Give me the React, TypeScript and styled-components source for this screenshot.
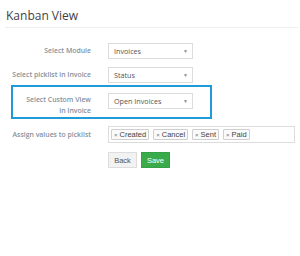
import React from "react";
import styled, { createGlobalStyle } from "styled-components";

const GlobalStyle = createGlobalStyle`
  body {
    margin: 0;
    background: #ffffff;
    font-family: "Open Sans", sans-serif;
  }
`;

const Page = styled.div`
  width: 300px;
  height: 256px;
  background: #fff;
`;

const Title = styled.h1`
  margin: 0;
  padding: 7px 0 0 6px;
  font-size: 12px;
  line-height: 18px;
  font-weight: 400;
  color: #3f3f3f;
`;

const Divider = styled.div`
  margin: 2px 2px 0 5px;
  height: 1px;
  background: #eeeeee;
`;

const Form = styled.div`
  display: flex;
  flex-direction: column;
  align-items: flex-start;
  padding: 15px 0 0 13px;
`;

const Row = styled.div<{ $highlighted?: boolean; $top: number }>`
  display: flex;
  align-items: flex-start;
  margin-top: ${(p) => p.$top}px;
  margin-left: ${(p) => (p.$highlighted ? "-2px" : "0")};
  padding: ${(p) => (p.$highlighted ? "6px 17px 1px 0" : "0")};
  border: ${(p) => (p.$highlighted ? "2px solid #1f9bd7" : "none")};
`;

const Label = styled.div<{ $lh: number; $multi?: boolean }>`
  width: 78px;
  margin-right: 17px;
  text-align: right;
  font-size: 6.9px;
  font-weight: 600;
  color: #85919c;
  line-height: ${(p) => p.$lh}px;
  padding-top: ${(p) => (p.$multi ? "1px" : "0")};
  white-space: ${(p) => (p.$multi ? "normal" : "nowrap")};
  display: flex;
  flex-direction: column;
  align-items: flex-end;
`;

const Select = styled.div`
  box-sizing: border-box;
  width: 85px;
  height: 16px;
  border: 1px solid #dcdcdc;
  background: #fff;
  display: flex;
  align-items: center;
  justify-content: space-between;
  padding: 0 4px 0 5px;
  font-size: 7.2px;
  color: #555;
`;

const Caret = styled.span`
  font-size: 5px;
  color: #8a8a8a;
`;

const TagBox = styled.div`
  box-sizing: border-box;
  width: 187px;
  height: 17px;
  border: 1px solid #dcdcdc;
  display: flex;
  align-items: center;
  gap: 4px;
  padding-left: 2px;
`;

const Tag = styled.span`
  box-sizing: border-box;
  height: 11px;
  display: inline-flex;
  align-items: center;
  padding: 0 2px;
  border: 1px solid #cfcfcf;
  border-radius: 1px;
  background: #fafafa;
  font-family: "Liberation Sans", Arial, sans-serif;
  font-size: 7.5px;
  color: #444;
`;

const TagX = styled.span`
  font-size: 6px;
  color: #777;
  margin-right: 2px;
`;

const Actions = styled.div`
  display: flex;
  gap: 4px;
  margin: 9px 0 0 95px;
`;

const Button = styled.button<{ $primary?: boolean }>`
  box-sizing: border-box;
  width: 29px;
  height: 16px;
  padding: 0;
  font-family: "Liberation Sans", Arial, sans-serif;
  font-size: 7.5px;
  border: 1px solid ${(p) => (p.$primary ? "#35a146" : "#dddddd")};
  background: ${(p) => (p.$primary ? "#3aab4b" : "#f2f2f2")};
  color: ${(p) => (p.$primary ? "#ffffff" : "#555555")};
`;

const tags = ["Created", "Cancel", "Sent", "Paid"];

export default function App() {
  return (
    <Page>
      <GlobalStyle />
      <Title>Kanban View</Title>
      <Divider />
      <Form>
        <Row $top={0}>
          <Label $lh={16}>Select Module</Label>
          <Select>
            Invoices<Caret>▼</Caret>
          </Select>
        </Row>
        <Row $top={8}>
          <Label $lh={16}>Select picklist in Invoice</Label>
          <Select>
            Status<Caret>▼</Caret>
          </Select>
        </Row>
        <Row $top={2} $highlighted>
          <Label $lh={11} $multi>
            <span>Select Custom View</span>
            <span>in Invoice</span>
          </Label>
          <Select>
            Open Invoices<Caret>▼</Caret>
          </Select>
        </Row>
        <Row $top={7}>
          <Label $lh={17}>Assign values to picklist</Label>
          <TagBox>
            {tags.map((t) => (
              <Tag key={t}>
                <TagX>×</TagX>
                {t}
              </Tag>
            ))}
          </TagBox>
        </Row>
        <Actions>
          <Button>Back</Button>
          <Button $primary>Save</Button>
        </Actions>
      </Form>
    </Page>
  );
}
